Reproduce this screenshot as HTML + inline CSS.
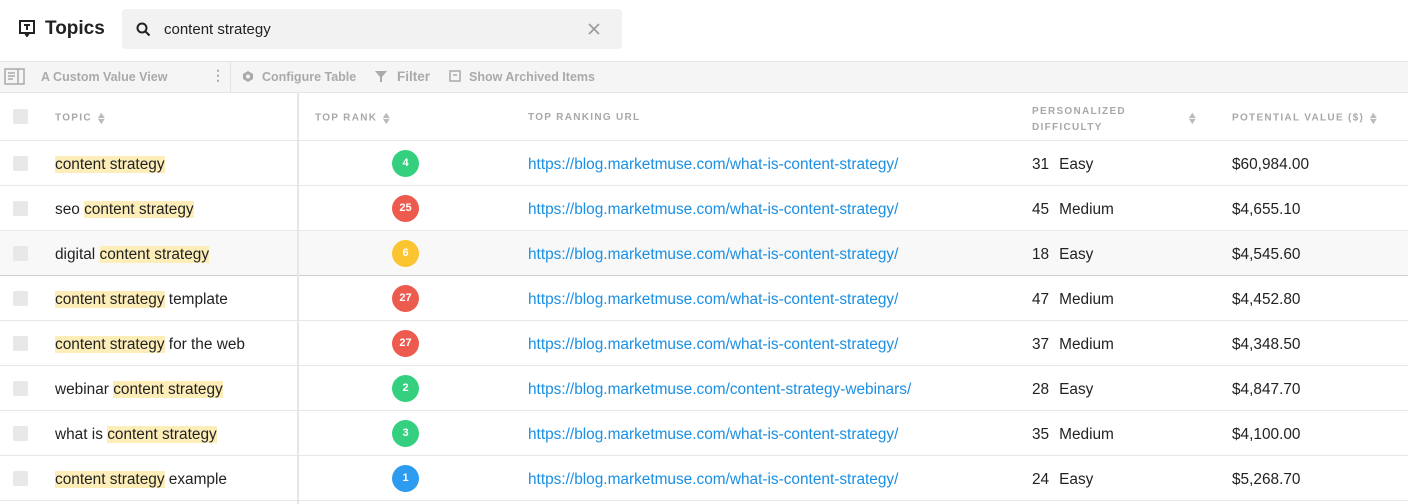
<!DOCTYPE html><html><head><style>
*{margin:0;padding:0;box-sizing:border-box}
body{width:1408px;height:504px;overflow:hidden;background:#fff;font-family:"Liberation Sans",sans-serif;position:relative;color:#222}
.a{position:absolute}
.tb{top:61px;left:0;width:1408px;height:32px;background:#f5f5f5;border-top:1px solid #e6e6e6;border-bottom:1px solid #e6e6e6}
.tt{font-size:12.5px;color:#aaa;font-weight:bold;top:70px}
.hd{font-size:10px;letter-spacing:1.3px;color:#a8a8a8;font-weight:bold}
.row{position:absolute;left:0;width:1408px;height:45px;border-bottom:1px solid #e8e8e8;font-size:15.4px}
.row>*{position:absolute;top:15px}
.cb{left:13px;top:15px!important;width:15px;height:15px;background:#e8e8e8;border-radius:2px}
.hl{background:#fdeeb9}
.b{left:392px;top:9px!important;width:27px;height:27px;border-radius:50%;color:#fff;font-size:11px;font-weight:bold;text-align:center;line-height:27px}
.u{left:528px;color:#1a8fe3}
.d{left:1032px}.v{left:1232px}
.d b{font-weight:normal;margin-left:10px}
.s{color:#bbb;font-size:9px;line-height:6px;display:inline-block;vertical-align:middle;margin-left:5px;transform:scaleX(1.3)}
</style></head><body>
<svg class="a" style="left:19px;top:20px" width="16" height="17" viewBox="0 0 16 17"><rect x="1" y="1" width="14" height="12" fill="none" stroke="#222" stroke-width="2"/><path d="M5 5h6M8 5v5M6 13l2 3 2-3" stroke="#222" stroke-width="2" fill="none"/></svg>
<div class="a" style="left:45px;top:18px;font-size:19px;font-weight:bold">Topics</div>
<div class="a" style="left:122px;top:9px;width:500px;height:40px;background:#f2f2f2;border-radius:4px"></div>
<svg class="a" style="left:136px;top:22px" width="15" height="15"><circle cx="6" cy="6" r="4.5" fill="none" stroke="#222" stroke-width="2"/><path d="M9.5 9.5l4 4" stroke="#222" stroke-width="2"/></svg>
<div class="a" style="left:164px;top:21px;font-size:15px">content strategy</div>
<svg class="a" style="left:588px;top:23px" width="12" height="12"><path d="M1 1l10 10M11 1L1 11" stroke="#999" stroke-width="1.6"/></svg>
<div class="a tb"></div>
<svg class="a" style="left:4px;top:68px" width="21" height="17"><rect x="1" y="1" width="19" height="15" fill="none" stroke="#aaa" stroke-width="1.5"/><path d="M14 1v15M4 5h7M4 8h7M4 11h5" stroke="#aaa" stroke-width="1.5"/></svg>
<div class="a tt" style="left:41px">A Custom Value View</div>
<div class="a tt" style="left:211px;top:67px;font-size:14px">⋮</div>
<div class="a" style="left:230px;top:62px;width:1px;height:30px;background:#e2e2e2"></div>
<svg class="a" style="left:242px;top:70px" width="12" height="13"><path d="M6 1l5 3v5l-5 3-5-3V4z" fill="#aaa"/><circle cx="6" cy="6.5" r="2" fill="#f5f5f5"/></svg>
<div class="a tt" style="left:262px">Configure Table</div>
<svg class="a" style="left:375px;top:70px" width="12" height="13"><path d="M0 1h12L7 7v5H5V7z" fill="#aaa"/></svg>
<div class="a tt" style="left:397px;font-size:13.5px;top:69px">Filter</div>
<svg class="a" style="left:449px;top:70px" width="12" height="12"><rect x="1" y="1" width="10" height="10" fill="none" stroke="#aaa" stroke-width="1.5"/><path d="M4 5h4" stroke="#aaa" stroke-width="1.5"/></svg>
<div class="a tt" style="left:469px">Show Archived Items</div>
<div class="row" style="top:93px;height:48px"><div class="cb" style="top:16px!important"></div></div>
<div class="a hd" style="left:55px;top:112px">TOPIC<span class="s">▲<br>▼</span></div>
<div class="a hd" style="left:315px;top:112px">TOP RANK<span class="s">▲<br>▼</span></div>
<div class="a hd" style="left:528px;top:112px">TOP RANKING URL</div>
<div class="a hd" style="left:1032px;top:104px;line-height:16px">PERSONALIZED<br>DIFFICULTY</div>
<div class="a hd" style="left:1183px;top:112px"><span class="s">▲<br>▼</span></div>
<div class="a hd" style="left:1232px;top:112px">POTENTIAL VALUE ($)<span class="s">▲<br>▼</span></div>
<div class="row" style="top:141px"><div class="cb"></div><div style="left:55px"><span class="hl">content strategy</span></div><div class="b" style="background:#35d07f">4</div><div class="u">https://blog.marketmuse.com/what-is-content-strategy/</div><div class="d">31<b>Easy</b></div><div class="v">$60,984.00</div></div>
<div class="row" style="top:186px"><div class="cb"></div><div style="left:55px">seo <span class="hl">content strategy</span></div><div class="b" style="background:#ec5b4e">25</div><div class="u">https://blog.marketmuse.com/what-is-content-strategy/</div><div class="d">45<b>Medium</b></div><div class="v">$4,655.10</div></div>
<div class="row" style="top:231px;background:#f8f8f8;border-bottom:1px solid #ccc"><div class="cb"></div><div style="left:55px">digital <span class="hl">content strategy</span></div><div class="b" style="background:#fbc531">6</div><div class="u">https://blog.marketmuse.com/what-is-content-strategy/</div><div class="d">18<b>Easy</b></div><div class="v">$4,545.60</div></div>
<div class="row" style="top:276px"><div class="cb"></div><div style="left:55px"><span class="hl">content strategy</span> template</div><div class="b" style="background:#ec5b4e">27</div><div class="u">https://blog.marketmuse.com/what-is-content-strategy/</div><div class="d">47<b>Medium</b></div><div class="v">$4,452.80</div></div>
<div class="row" style="top:321px"><div class="cb"></div><div style="left:55px"><span class="hl">content strategy</span> for the web</div><div class="b" style="background:#ec5b4e">27</div><div class="u">https://blog.marketmuse.com/what-is-content-strategy/</div><div class="d">37<b>Medium</b></div><div class="v">$4,348.50</div></div>
<div class="row" style="top:366px"><div class="cb"></div><div style="left:55px">webinar <span class="hl">content strategy</span></div><div class="b" style="background:#35d07f">2</div><div class="u">https://blog.marketmuse.com/content-strategy-webinars/</div><div class="d">28<b>Easy</b></div><div class="v">$4,847.70</div></div>
<div class="row" style="top:411px"><div class="cb"></div><div style="left:55px">what is <span class="hl">content strategy</span></div><div class="b" style="background:#35d07f">3</div><div class="u">https://blog.marketmuse.com/what-is-content-strategy/</div><div class="d">35<b>Medium</b></div><div class="v">$4,100.00</div></div>
<div class="row" style="top:456px"><div class="cb"></div><div style="left:55px"><span class="hl">content strategy</span> example</div><div class="b" style="background:#2d9cf0">1</div><div class="u">https://blog.marketmuse.com/what-is-content-strategy/</div><div class="d">24<b>Easy</b></div><div class="v">$5,268.70</div></div>
<div class="a" style="left:297px;top:93px;width:2px;height:411px;background:#e6e6e6"></div>
</body></html>
